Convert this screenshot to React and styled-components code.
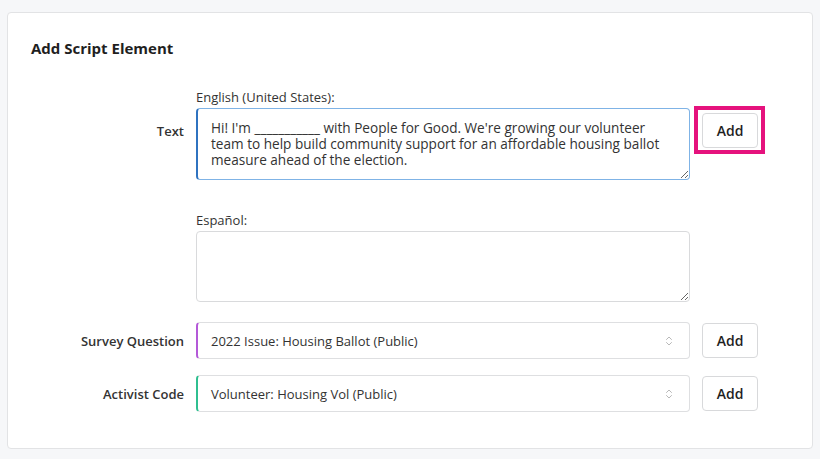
import React from 'react'
import styled, { createGlobalStyle } from 'styled-components'
import { ChevronsUpDown } from 'lucide-react'

const GlobalStyle = createGlobalStyle`
  html, body {
    margin: 0;
    padding: 0;
    background: #f6f7f9;
    font-family: "Open Sans", "Noto Sans", sans-serif;
    color: #222;
  }
  * { box-sizing: border-box; }
`

const Page = styled.div`
  padding: 12px 7px 11px 7px;
`

const Card = styled.section`
  background: #fff;
  border: 1px solid #e2e3e5;
  border-radius: 4px;
  padding: 25px 24px 36px 23px;
`

const Title = styled.h2`
  margin: 0 0 30px 0;
  font-size: 15px;
  line-height: 20px;
  font-weight: 700;
  color: #1f1f1f;
`

const Grid = styled.div`
  display: grid;
  grid-template-columns: 153px 494px 56px;
  column-gap: 12px;
  align-items: start;
`

const FieldLabel = styled.div`
  grid-column: ${p => p.col || 'auto'};
  text-align: right;
  font-size: 13px;
  font-weight: 600;
  line-height: 18px;
  color: #333;
  padding-top: ${p => p.top || 0}px;
  align-self: ${p => p.center ? 'center' : 'start'};
`

const LangLabel = styled.div`
  grid-column: 2;
  font-size: 13px;
  line-height: 18px;
  color: #333;
  margin: ${p => p.gap || 0}px 0 2px 0;
`

const TextArea = styled.textarea`
  display: block;
  width: 100%;
  height: ${p => p.h}px;
  resize: vertical;
  font-family: inherit;
  font-size: 13.6px;
  line-height: 16px;
  color: #333;
  padding: 11px 12px 6px 13px;
  border: 1px solid ${p => p.active ? '#7fb3e6' : '#d9dadc'};
  border-left: ${p => p.active ? '2px solid #2f73c0' : '1px solid #d9dadc'};
  border-radius: 4px;
  outline: none;
  background: #fff;
`

const SelectBox = styled.div`
  display: flex;
  align-items: center;
  justify-content: space-between;
  height: 37px;
  padding: 0 14px 0 13px;
  border: 1px solid #dedfe1;
  border-left: 2px solid ${p => p.accent};
  border-radius: 4px;
  font-size: 13px;
  color: #333;
  background: #fff;
  svg { color: #a0a0a0; }
`

const AddButton = styled.button`
  position: relative;
  width: 56px;
  height: 35px;
  margin-top: ${p => p.top || 0}px;
  align-self: ${p => p.center ? 'center' : 'start'};
  background: #fff;
  border: 1px solid #d8d9db;
  border-radius: 4px;
  font-family: inherit;
  font-size: 14px;
  font-weight: 600;
  color: #1f1f1f;
  cursor: pointer;

  ${p => p.highlight && `
    &::after {
      content: '';
      position: absolute;
      top: -8px;
      left: -9px;
      right: -8px;
      bottom: -7px;
      border: 4px solid #e5127d;
      pointer-events: none;
    }
  `}
`

const RowGap = styled.div`
  grid-column: 1 / -1;
  height: ${p => p.h}px;
`

const App = () => {
  return (
    <Page>
      <GlobalStyle />
      <Card>
        <Title>Add Script Element</Title>
        <Grid>
          <LangLabel>English (United States):</LangLabel>
          <FieldLabel col={1} top={14}>Text</FieldLabel>
          <TextArea
            h={72}
            active
            defaultValue="Hi! I'm ___________ with People for Good. We're growing our volunteer team to help build community support for an affordable housing ballot measure ahead of the election."
          />
          <AddButton top={5} highlight>Add</AddButton>

          <LangLabel gap={31}>Español:</LangLabel>
          <FieldLabel col={1} />
          <TextArea h={71} defaultValue="" />
          <div />

          <RowGap h={20} />

          <FieldLabel col={1} center>Survey Question</FieldLabel>
          <SelectBox accent="#b459d8">
            <span>2022 Issue: Housing Ballot (Public)</span>
            <ChevronsUpDown size={12} strokeWidth={1.5} />
          </SelectBox>
          <AddButton center>Add</AddButton>

          <RowGap h={16} />

          <FieldLabel col={1} center>Activist Code</FieldLabel>
          <SelectBox accent="#2fbf90">
            <span>Volunteer: Housing Vol (Public)</span>
            <ChevronsUpDown size={12} strokeWidth={1.5} />
          </SelectBox>
          <AddButton center>Add</AddButton>
        </Grid>
      </Card>
    </Page>
  )
}

export default App
